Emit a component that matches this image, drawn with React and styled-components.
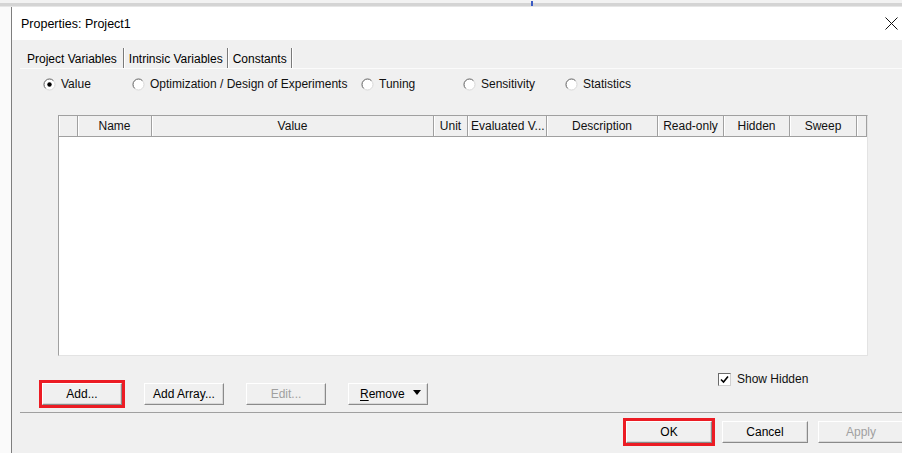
import styled, { createGlobalStyle } from "styled-components";

const GlobalStyle = createGlobalStyle`
  html, body {
    margin: 0;
    padding: 0;
  }
  body {
    background: #fafafa;
    font-family: "Liberation Sans", Arial, sans-serif;
    font-size: 12px;
    color: #000;
  }
`;

const modes = [
  { label: "Value", width: 89, checked: true },
  { label: "Optimization / Design of Experiments", width: 229 },
  { label: "Tuning", width: 102 },
  { label: "Sensitivity", width: 102 },
  { label: "Statistics", width: 100 },
];

const columns = [
  { label: "", width: 19 },
  { label: "Name", width: 74 },
  { label: "Value", width: 282 },
  { label: "Unit", width: 34 },
  { label: "Evaluated V...", width: 79, left: true },
  { label: "Description", width: 111 },
  { label: "Read-only", width: 66 },
  { label: "Hidden", width: 66 },
  { label: "Sweep", width: 67 },
  { label: "", width: 10 },
];

function Radio({ checked }) {
  return (
    <svg width="13" height="13" viewBox="0 0 13 13">
      <circle cx="6.5" cy="6.5" r="5.5" fill="#fff" stroke="#d8d8d8" />
      <path d="M10.4 2.6 A5.5 5.5 0 0 0 2.6 10.4" fill="none" stroke="#6e6e6e" />
      {checked && <circle cx="6.5" cy="6.5" r="2.2" fill="#000" />}
    </svg>
  );
}

function CloseIcon() {
  return (
    <svg width="13" height="13" viewBox="0 0 13 13">
      <path d="M0.5 0.5 L12.5 12.5 M12.5 0.5 L0.5 12.5" stroke="#111" strokeWidth="1" />
    </svg>
  );
}

export default function App() {
  return (
    <Page>
      <GlobalStyle />
      <TopStrip>
        <Tick />
      </TopStrip>
      <Dialog>
        <TitleBar>
          <span>Properties: Project1</span>
          <CloseIcon />
        </TitleBar>
        <Body>
          <Tabs>
            <Tab $active>Project Variables</Tab>
            <Tab>Intrinsic Variables</Tab>
            <Tab>Constants</Tab>
          </Tabs>
          <Pane>
            <RadioRow>
              {modes.map((m) => (
                <RadioItem key={m.label} $width={m.width}>
                  <Radio checked={m.checked} />
                  <span>{m.label}</span>
                </RadioItem>
              ))}
            </RadioRow>

            <Table>
              <HeaderRow>
                {columns.map((c, i) => (
                  <HeaderCell key={i} $width={c.width} $left={c.left}>
                    {c.label}
                  </HeaderCell>
                ))}
              </HeaderRow>
              <TableBody />
            </Table>

            <ActionRow>
              <Buttons>
                <Button $marked>Add...</Button>
                <Button>Add Array...</Button>
                <Button disabled>Edit...</Button>
                <MenuButton>
                  <span>
                    <u>R</u>emove
                  </span>
                  <Caret />
                </MenuButton>
              </Buttons>
              <CheckLabel>
                <CheckBox>
                  <svg width="9" height="9" viewBox="0 0 9 9">
                    <path d="M1 4.5 L3.5 7 L8 1.5" fill="none" stroke="#000" strokeWidth="1.6" />
                  </svg>
                </CheckBox>
                Show Hidden
              </CheckLabel>
            </ActionRow>
          </Pane>
          <Footer>
            <Button $wide $marked>OK</Button>
            <Button $wide>Cancel</Button>
            <Button $wide disabled>Apply</Button>
          </Footer>
        </Body>
      </Dialog>
    </Page>
  );
}

const Page = styled.div`
  width: 902px;
  height: 453px;
  overflow: hidden;
  display: flex;
  flex-direction: column;
`;

const TopStrip = styled.div`
  height: 7px;
  flex-shrink: 0;
  display: flex;
  padding-left: 531px;
  background: linear-gradient(#f2f2f2 0 3px, #d4d4d4 3px 6px, #e6e6e6 6px);
`;

const Tick = styled.div`
  width: 2px;
  height: 5px;
  margin-top: 1px;
  background: #3b5bc4;
`;

const Dialog = styled.div`
  flex: 1;
  width: 902px;
  margin-left: 11px;
  border-left: 1px solid #7e7e7e;
  display: flex;
  flex-direction: column;
`;

const TitleBar = styled.div`
  height: 33px;
  flex-shrink: 0;
  background: #fff;
  display: flex;
  align-items: center;
  justify-content: space-between;
  padding: 0 16px 0 9px;
  font-size: 12.5px;
  color: #000;
`;

const Body = styled.div`
  flex: 1;
  background: #f0f0f0;
  padding: 8px 8px 0 8px;
  display: flex;
  flex-direction: column;
`;

const Tabs = styled.div`
  display: flex;
  height: 20px;
  margin-left: 2px;
`;

const Tab = styled.div`
  display: flex;
  align-items: center;
  padding: 1px ${(p) => (p.$active ? "6px 0 5px" : "4px 0 4px")};
  border-right: 1px solid #7a7a7a;
  box-shadow: 1px 0 0 #fff;
  margin-right: 1px;
  color: #000;
  white-space: nowrap;
`;

const Pane = styled.div`
  display: flex;
  flex-direction: column;
  border-top: 1px solid #fbfbfb;
  border-bottom: 1px solid #a0a0a0;
  padding: 0 0 7px 1px;
`;

const RadioRow = styled.div`
  display: flex;
  align-items: center;
  height: 14px;
  margin-top: 8px;
  padding-left: 22px;
`;

const RadioItem = styled.div`
  display: flex;
  align-items: center;
  gap: 5px;
  width: ${(p) => p.$width}px;
  flex-shrink: 0;
  white-space: nowrap;
  color: #111;
`;

const Table = styled.div`
  margin: 24px 0 0 37px;
  width: 808px;
  height: 239px;
  border-top: 1px solid #a0a0a0;
  border-left: 1px solid #a0a0a0;
  border-right: 1px solid #e3e3e3;
  border-bottom: 1px solid #e3e3e3;
  display: flex;
  flex-direction: column;
  background: #fff;
`;

const HeaderRow = styled.div`
  display: flex;
  height: 20px;
  border-bottom: 1px solid #a0a0a0;
  background: #f0f0f0;
`;

const HeaderCell = styled.div`
  width: ${(p) => p.$width}px;
  flex-shrink: 0;
  box-sizing: border-box;
  display: flex;
  align-items: center;
  justify-content: ${(p) => (p.$left ? "flex-start" : "center")};
  padding-left: ${(p) => (p.$left ? "3px" : "0")};
  border-right: 1px solid #a0a0a0;
  box-shadow: inset 1px 0 0 #fff;
  white-space: nowrap;
  overflow: hidden;
  color: #111;
`;

const TableBody = styled.div`
  flex: 1;
  background: #fff;
`;

const ActionRow = styled.div`
  display: flex;
  height: 33px;
  margin-top: 16px;
  padding-left: 21px;
`;

const Buttons = styled.div`
  display: flex;
  gap: 22px;
  align-self: flex-end;
`;

const Button = styled.button`
  width: ${(p) => (p.$wide ? 86 : 80)}px;
  height: 22px;
  box-sizing: border-box;
  padding: 0;
  font-family: "Liberation Sans", Arial, sans-serif;
  font-size: 12px;
  color: ${(p) => (p.disabled ? "#a0a0a0" : "#000")};
  background: #f0f0f0;
  border: 1px solid;
  border-color: #fff #8a8a8a #8a8a8a #fff;
  box-shadow: inset -1px -1px 0 #d8d8d8;
  outline: ${(p) => (p.$marked ? "3px solid #ec1c24" : "none")};
  outline-offset: 0;
`;

const MenuButton = styled(Button)`
  display: flex;
  align-items: center;
  padding: 0 6px 0 11px;
  text-align: left;

  u {
    text-decoration: underline;
    text-underline-offset: 2px;
  }
`;

const Caret = styled.span`
  margin-left: auto;
  width: 0;
  height: 0;
  border-left: 4px solid transparent;
  border-right: 4px solid transparent;
  border-top: 5px solid #000;
  margin-top: -3px;
`;

const CheckLabel = styled.label`
  display: flex;
  align-items: center;
  gap: 6px;
  align-self: flex-start;
  margin-left: 290px;
  color: #111;
  white-space: nowrap;
`;

const CheckBox = styled.span`
  width: 13px;
  height: 13px;
  box-sizing: border-box;
  border: 1px solid #6a6a6a;
  border-right-color: #d0d0d0;
  border-bottom-color: #d0d0d0;
  background: #fff;
  display: flex;
  align-items: center;
  justify-content: center;
`;

const Footer = styled.div`
  display: flex;
  justify-content: flex-end;
  gap: 10px;
  padding: 8px 2px 0 0;
`;
